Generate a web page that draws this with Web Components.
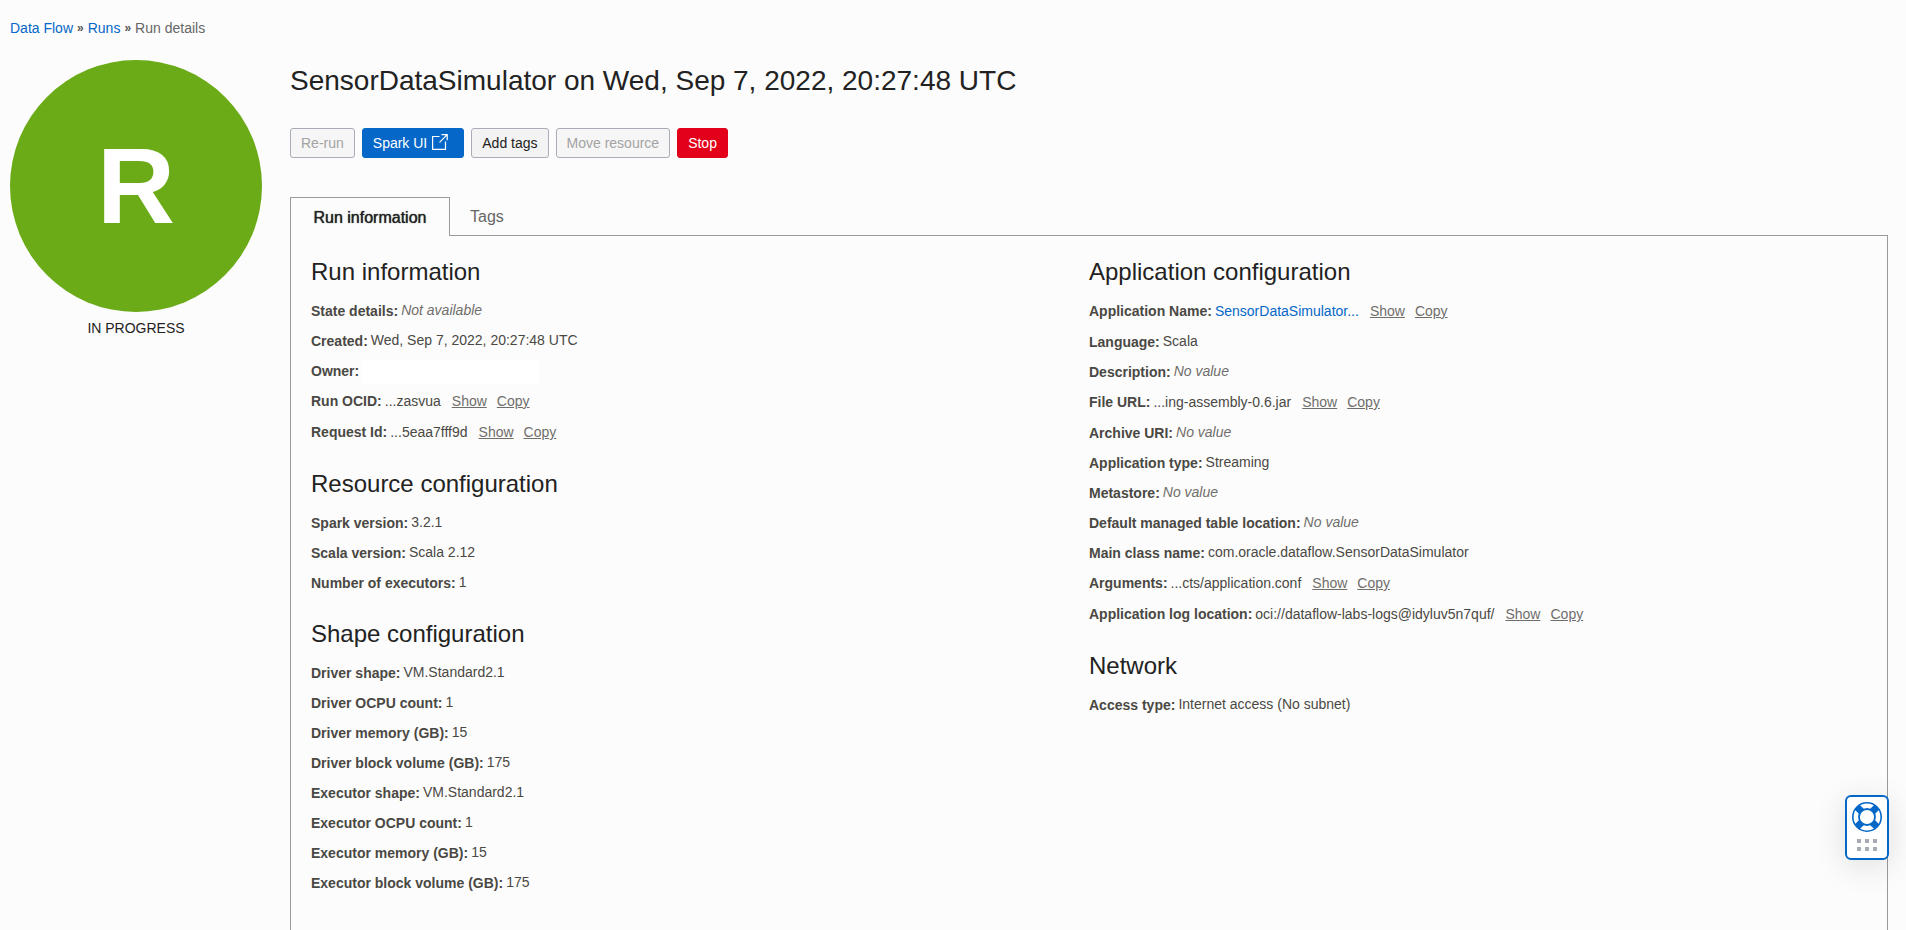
<!DOCTYPE html>
<html lang="en">
<head>
<meta charset="utf-8">
<title>Run details</title>
<style>
  html, body { margin: 0; }
  body {
    background: #fcfcfc;
    color: #4a4843;
    font: 14px/22px "Liberation Sans", Arial, sans-serif;
    --link: #0567c8;
    --ink: #222;
    --line: #9a9a9a;
    --muted: #706e6b;
  }
</style>
</head>
<body>
<run-page>
  <crumb-trail slot="crumbs"></crumb-trail>
  <state-badge slot="state" letter="R">IN PROGRESS</state-badge>
  <span slot="title">SensorDataSimulator on Wed, Sep 7, 2022, 20:27:48 UTC</span>
  <action-bar slot="actions"></action-bar>
  <tab-panel>
    <div slot="left">
      <info-section heading="Run information">
        <info-row label="State details:" empty>Not available</info-row>
        <info-row label="Created:">Wed, Sep 7, 2022, 20:27:48 UTC</info-row>
        <info-row label="Owner:" redacted></info-row>
        <info-row label="Run OCID:" tools>...zasvua</info-row>
        <info-row label="Request Id:" tools>...5eaa7fff9d</info-row>
      </info-section>
      <info-section heading="Resource configuration">
        <info-row label="Spark version:">3.2.1</info-row>
        <info-row label="Scala version:">Scala 2.12</info-row>
        <info-row label="Number of executors:">1</info-row>
      </info-section>
      <info-section heading="Shape configuration">
        <info-row label="Driver shape:">VM.Standard2.1</info-row>
        <info-row label="Driver OCPU count:">1</info-row>
        <info-row label="Driver memory (GB):">15</info-row>
        <info-row label="Driver block volume (GB):">175</info-row>
        <info-row label="Executor shape:">VM.Standard2.1</info-row>
        <info-row label="Executor OCPU count:">1</info-row>
        <info-row label="Executor memory (GB):">15</info-row>
        <info-row label="Executor block volume (GB):">175</info-row>
      </info-section>
    </div>
    <div slot="right">
      <info-section heading="Application configuration">
        <info-row label="Application Name:" tools href="#application">SensorDataSimulator...</info-row>
        <info-row label="Language:">Scala</info-row>
        <info-row label="Description:" empty>No value</info-row>
        <info-row label="File URL:" tools>...ing-assembly-0.6.jar</info-row>
        <info-row label="Archive URI:" empty>No value</info-row>
        <info-row label="Application type:">Streaming</info-row>
        <info-row label="Metastore:" empty>No value</info-row>
        <info-row label="Default managed table location:" empty>No value</info-row>
        <info-row label="Main class name:">com.oracle.dataflow.SensorDataSimulator</info-row>
        <info-row label="Arguments:" tools>...cts/application.conf</info-row>
        <info-row label="Application log location:" tools>oci://dataflow-labs-logs@idyluv5n7quf/</info-row>
      </info-section>
      <info-section heading="Network">
        <info-row label="Access type:">Internet access (No subnet)</info-row>
      </info-section>
    </div>
  </tab-panel>
</run-page>
<help-widget></help-widget>

<script>
class Base extends HTMLElement {
  connectedCallback() {
    if (!this.shadowRoot) this.attachShadow({ mode: "open" }).innerHTML = this.render();
  }
}

customElements.define("run-page", class extends Base {
  render() {
    return `<style>
      :host { display: flex; flex-direction: column; min-height: 100vh; box-sizing: border-box; padding: 17px 18px 0 10px; }
      .body { flex: 1; display: grid; grid-template-columns: 252px 1fr; column-gap: 28px; margin-top: 21px; }
      main { display: flex; flex-direction: column; min-width: 0; }
      h1 { margin: 0 0 26px; font-size: 28px; line-height: 42px; font-weight: 400; color: var(--ink); }
    </style>
    <slot name="crumbs"></slot>
    <div class="body">
      <slot name="state"></slot>
      <main><h1><slot name="title"></slot></h1><slot name="actions"></slot><slot></slot></main>
    </div>`;
  }
});

customElements.define("crumb-trail", class extends Base {
  render() {
    return `<style>
      :host { display: block; }
      nav { display: flex; gap: 4px; align-items: center; height: 22px; color: #666; }
      a { color: var(--link); text-decoration: none; }
      i { font: bold 12px/22px "Liberation Sans", sans-serif; color: #555; }
    </style>
    <nav aria-label="Breadcrumb"><a href="#dataflow">Data Flow</a><i>»</i><a href="#runs">Runs</a><i>»</i><span>Run details</span></nav>`;
  }
});

customElements.define("state-badge", class extends Base {
  render() {
    return `<style>
      :host { display: block; text-align: center; color: var(--ink); }
      .disc { display: grid; place-items: center; aspect-ratio: 1; margin-bottom: 5px; border-radius: 50%; background: #6aab17; color: #fff; font-size: 108px; line-height: 120px; font-weight: 700; }
    </style>
    <div class="disc">${this.getAttribute("letter")}</div><slot></slot>`;
  }
});

customElements.define("action-bar", class extends Base {
  render() {
    return `<style>
      :host { display: flex; gap: 7px; margin-bottom: 39px; }
      button { display: flex; align-items: center; height: 30px; padding: 0 10px; border: 1px solid #a8adb7; border-radius: 3px; background: #f3f3f3; color: var(--ink); font: inherit; }
      button:disabled { color: #a3a3a3; background: #f6f6f6; }
      .primary { background: var(--link); border-color: var(--link); color: #fff; }
      .danger { background: #e2001a; border-color: #e2001a; color: #fff; }
      svg { margin: 0 5px 3px 5px; }
    </style>
    <button disabled>Re-run</button>
    <button class="primary">Spark UI<svg width="16" height="16" viewBox="0 0 16 16" fill="none" stroke="#fff" stroke-width="1.200" aria-hidden="true"><path d="M7.500 2.500H.6v12.900h12.900V7.500M9.500.6h5.700v5.700M15.200.6 7.500 8.300"/></svg></button>
    <button>Add tags</button>
    <button disabled>Move resource</button>
    <button class="danger">Stop</button>`;
  }
});

customElements.define("tab-panel", class extends Base {
  render() {
    return `<style>
      :host { flex: 1; display: flex; flex-direction: column; }
      .tabs { display: flex; height: 38px; position: relative; z-index: 1; }
      button { box-sizing: border-box; height: 39px; padding: 1px 20px 0; border: 0; background: none; font: inherit; font-size: 16px; color: #666; }
      [aria-selected=true] { min-width: 160px; border: 1px solid var(--line); border-bottom: 0; background: #fcfcfc; color: var(--ink); text-shadow: 0 0 1px currentColor; }
      .panel { flex: 1; display: grid; grid-template-columns: 1fr 1fr; padding: 22px 20px; border: 1px solid var(--line); border-bottom: 0; }
    </style>
    <div class="tabs" role="tablist"><button role="tab" aria-selected="true">Run information</button><button role="tab" aria-selected="false">Tags</button></div>
    <div class="panel" role="tabpanel"><slot name="left"></slot><slot name="right"></slot></div>`;
  }
});

customElements.define("info-section", class extends Base {
  render() {
    return `<style>
      :host { display: block; margin-bottom: 18px; }
      h2 { margin: 0 0 14px; font-size: 24px; line-height: 28px; font-weight: 400; color: var(--ink); }
    </style>
    <h2>${this.getAttribute("heading")}</h2><slot></slot>`;
  }
});

customElements.define("info-row", class extends Base {
  render() {
    const href = this.getAttribute("href");
    return `<style>
      :host { display: flex; align-items: flex-start; gap: 3px; height: 30px; white-space: nowrap; }
      :host([tools]) { height: 31px; }
      .value { line-height: 20px; }
      :host([tools]) .value { line-height: 22px; }
      :host([empty]) .value { font-style: italic; color: var(--muted); }
      :host([redacted]) .value { width: 177px; height: 24px; background: #fff; }
      a { color: var(--link); text-decoration: none; }
      .tools { display: flex; gap: 10px; margin-left: 8px; }
      button { padding: 0; border: 0; background: none; color: var(--muted); font: inherit; text-decoration: underline; }
    </style>
    <b>${this.getAttribute("label")}</b>
    <span class="value">${href ? `<a href="${href}"><slot></slot></a>` : "<slot></slot>"}</span>
    ${this.hasAttribute("tools") ? `<span class="tools"><button>Show</button><button>Copy</button></span>` : ""}`;
  }
});

customElements.define("help-widget", class extends Base {
  render() {
    return `<style>
      :host { position: fixed; right: 17px; bottom: 70px; z-index: 2; }
      button { box-sizing: border-box; display: flex; flex-direction: column; align-items: center; width: 44px; height: 65px; padding: 5px 0 0; border: 2px solid var(--link); border-radius: 6px; background: #fff; box-shadow: 0 6px 32px rgba(0,0,0,.12); }
      svg { display: block; }
    </style>
    <button aria-label="Help"><svg width="30" height="50" viewBox="0 0 30 50" fill="none">
      <g stroke="#0567c8"><path stroke-width="7" d="m20.200 9.800 4.700-4.700M20.200 20.200l4.700 4.700M9.800 20.200l-4.700 4.700M9.800 9.800l-4.700-4.700"/><circle cx="15" cy="15" r="14.200" stroke-width="1.600"/><circle cx="15" cy="15" r="8" stroke-width="1.800"/></g>
      <path fill="#a8adb5" d="M5 37h4v4H5zM13 37h4v4h-4zM21 37h4v4h-4zM5 45h4v4H5zM13 45h4v4h-4zM21 45h4v4h-4z"/>
    </svg></button>`;
  }
});
</script>
</body>
</html>
